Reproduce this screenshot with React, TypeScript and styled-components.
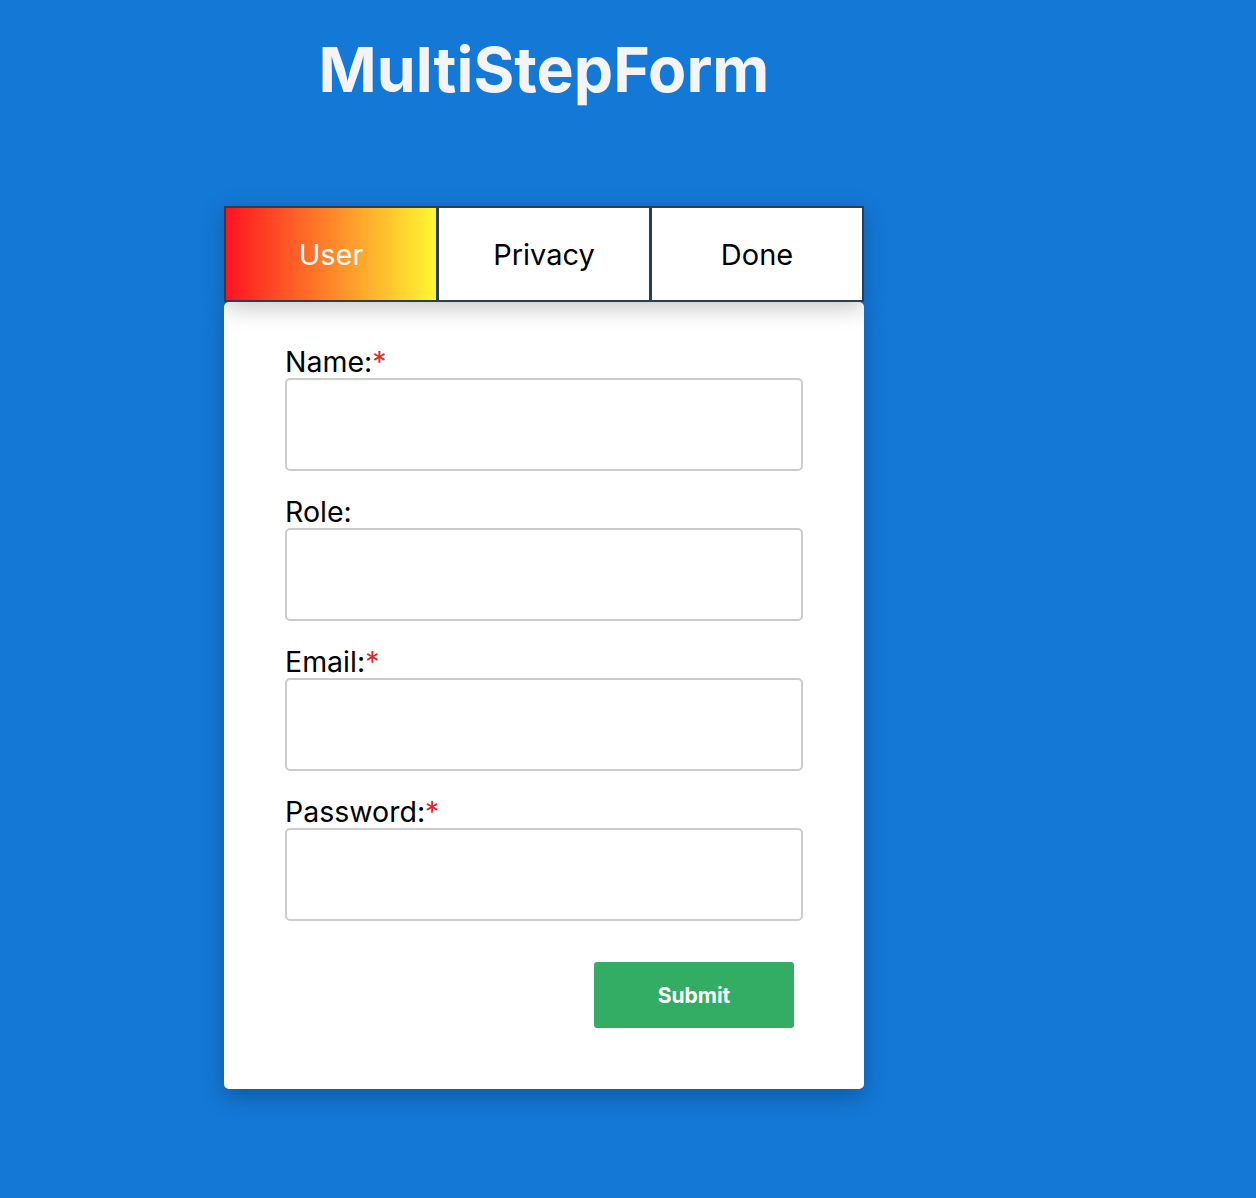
import React from "react";
import { createGlobalStyle, styled } from "styled-components";

const GlobalStyle = createGlobalStyle`
  html, body {
    margin: 0;
    padding: 0;
    background: #1478d7;
    font-family: Inter, "Noto Sans", sans-serif;
  }
  * {
    box-sizing: border-box;
  }
`;

const Page = styled.div`
  min-height: 1198px;
  padding: 32px 0 0 224px;
`;

const Column = styled.div`
  width: 640px;
  display: flex;
  flex-direction: column;
`;

const Title = styled.h1`
  margin: 0 0 99px;
  font-size: 62.5px;
  line-height: 1.2;
  font-weight: 700;
  color: #f4f4f4;
  text-align: center;
`;

const Steps = styled.div`
  position: relative;
  z-index: 1;
  display: flex;
  gap: 3px;
  padding: 2px;
  background: #2c3e50;
  box-shadow: 0 6px 22px rgba(0, 0, 0, 0.22);
`;

const Step = styled.div<{ $active?: boolean }>`
  flex: 1;
  height: 92px;
  display: flex;
  align-items: center;
  justify-content: center;
  font-size: 29px;
  color: ${(p) => (p.$active ? "#ffffff" : "#000000")};
  background: ${(p) =>
    p.$active ? "linear-gradient(to right, #ff1421, #fff833)" : "#ffffff"};
`;

const Card = styled.form`
  background: #ffffff;
  border-radius: 5px;
  padding: 43px 61px 61px;
  box-shadow: 0 8px 22px rgba(0, 0, 0, 0.25);
`;

const Field = styled.div`
  display: flex;
  flex-direction: column;
  margin-bottom: 24px;
`;

const Label = styled.label`
  font-size: 28.5px;
  line-height: 33px;
  color: #000000;
`;

const Required = styled.span`
  color: #d92b2b;
`;

const Input = styled.input`
  height: 93px;
  width: 100%;
  border: 2px solid #cccccc;
  border-radius: 5px;
  font-size: 24px;
  padding: 0 12px;
  outline: none;
`;

const Actions = styled.div`
  display: flex;
  justify-content: flex-end;
  padding: 17px 9px 0 0;
`;

const SubmitButton = styled.button`
  width: 200px;
  height: 66px;
  border: none;
  border-radius: 3px;
  background: #33ad63;
  color: #ffffff;
  font-family: Inter, "Noto Sans", sans-serif;
  font-size: 21px;
  font-weight: 700;
  cursor: pointer;
`;

const fields = [
  { name: "name", label: "Name:", required: true, type: "text" },
  { name: "role", label: "Role:", required: false, type: "text" },
  { name: "email", label: "Email:", required: true, type: "email" },
  { name: "password", label: "Password:", required: true, type: "password" },
];

export default function App() {
  return (
    <React.Fragment>
      <GlobalStyle />
      <Page>
        <Column>
          <Title>MultiStepForm</Title>
          <Steps>
            <Step $active>User</Step>
            <Step>Privacy</Step>
            <Step>Done</Step>
          </Steps>
          <Card onSubmit={(e) => e.preventDefault()}>
            {fields.map((f) => (
              <Field key={f.name}>
                <Label htmlFor={f.name}>
                  {f.label}
                  {f.required && <Required>*</Required>}
                </Label>
                <Input id={f.name} name={f.name} type={f.type} />
              </Field>
            ))}
            <Actions>
              <SubmitButton type="submit">Submit</SubmitButton>
            </Actions>
          </Card>
        </Column>
      </Page>
    </React.Fragment>
  );
}
